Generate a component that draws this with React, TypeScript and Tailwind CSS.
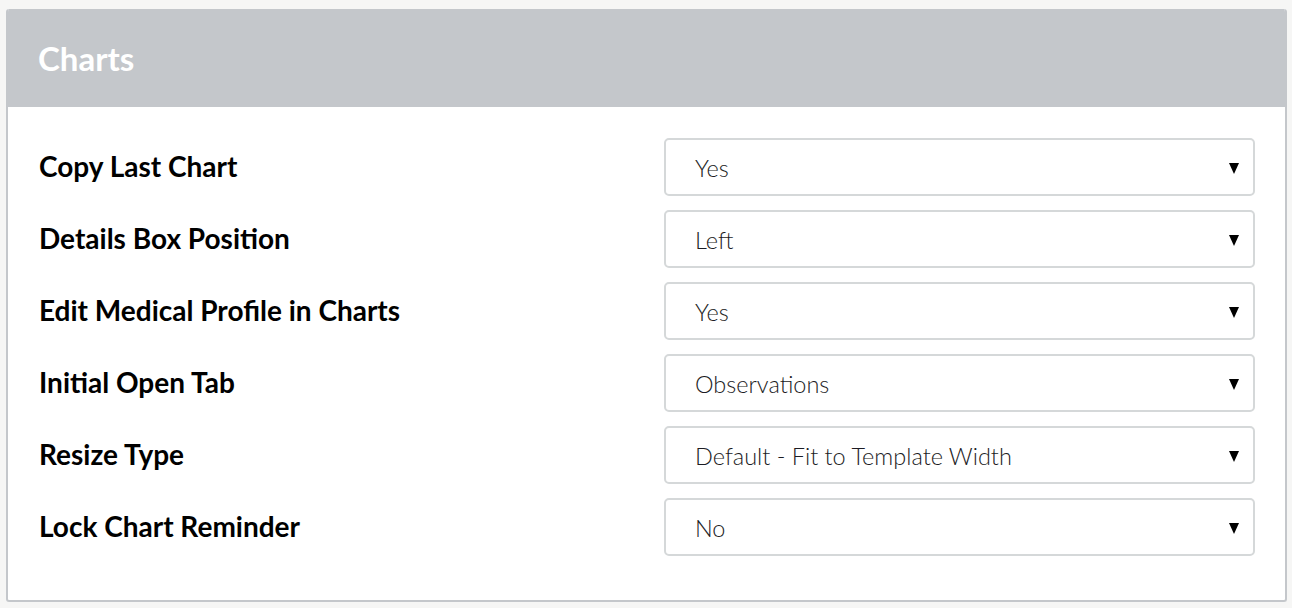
const rows = [
  { label: "Copy Last Chart", value: "Yes" },
  { label: "Details Box Position", value: "Left" },
  { label: "Edit Medical Profile in Charts", value: "Yes" },
  { label: "Initial Open Tab", value: "Observations" },
  { label: "Resize Type", value: "Default - Fit to Template Width" },
  { label: "Lock Chart Reminder", value: "No" },
];

function SelectBox({ value }: { value: string }) {
  return (
    <div className="flex h-[58px] w-[591px] items-center justify-between rounded-[5px] border-2 border-[#d5d8d9] bg-white pl-[29px] pr-[14px]">
      <span className="mt-[3px] text-[23.5px] font-light text-[#1c1c24]">{value}</span>
      <svg width="10" height="11" viewBox="0 0 10 11" className="mt-[2px]">
        <path d="M0 0 H10 L5 11 Z" fill="#000" />
      </svg>
    </div>
  );
}

export default function App() {
  return (
    <div className="min-h-screen bg-[#f6f6f5] pl-[6px] pt-[9px] font-['Lato',sans-serif]">
      <div className="w-[1281px] overflow-hidden rounded-[3px] border-2 border-t-0 border-[#c4c7cb] bg-white">
        {/* Header */}
        <div className="flex h-[98px] items-center bg-[#c4c7cb] pl-[30px]">
          <h2 className="mt-[2px] text-[33px] font-bold text-white">Charts</h2>
        </div>

        {/* Settings */}
        <div className="flex flex-col gap-[14px] pb-[44px] pl-[31px] pr-[30px] pt-[31px]">
          {rows.map((row) => (
            <div key={row.label} className="flex items-center justify-between">
              <span className="mb-[2px] text-[28px] font-bold text-black">{row.label}</span>
              <SelectBox value={row.value} />
            </div>
          ))}
        </div>
      </div>
    </div>
  );
}
